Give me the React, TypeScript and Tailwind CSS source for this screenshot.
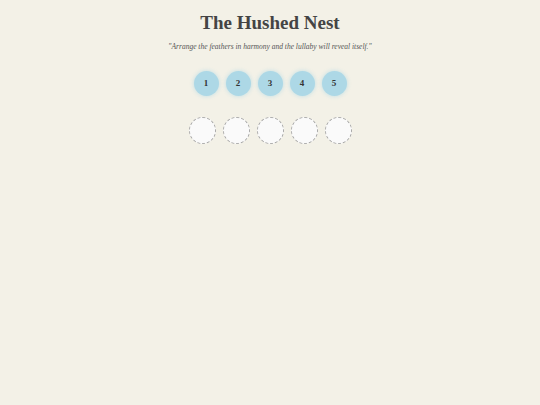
const feathers = [1, 2, 3, 4, 5];

export default function App() {
  return (
    <div
      className="flex min-h-[405px] w-full flex-col items-center bg-[#f3f1e7] text-[#444]"
      style={{ fontFamily: 'Georgia, "Liberation Serif", serif' }}
    >
      <h1 className="mt-[12px] text-[19px] font-bold leading-[22px]">The Hushed Nest</h1>
      <p className="mt-[8px] text-[7.5px] italic leading-[10px] text-[#555]">
        "Arrange the feathers in harmony and the lullaby will reveal itself."
      </p>

      {/* feathers to pick from */}
      <div className="mt-[19px] flex gap-[7px]">
        {feathers.map((n) => (
          <div
            key={n}
            className="flex h-[25px] w-[25px] items-center justify-center rounded-full bg-[#add8e6] text-[9px] font-bold text-[#333] shadow-[0_0_4px_rgba(173,216,230,0.8)]"
          >
            {n}
          </div>
        ))}
      </div>

      {/* empty nest slots */}
      <div className="mt-[21px] flex gap-[7px]">
        {feathers.map((n) => (
          <div
            key={n}
            className="h-[27px] w-[27px] rounded-full border border-dashed border-[#aaa] bg-[#fafafa]"
          />
        ))}
      </div>
    </div>
  );
}
